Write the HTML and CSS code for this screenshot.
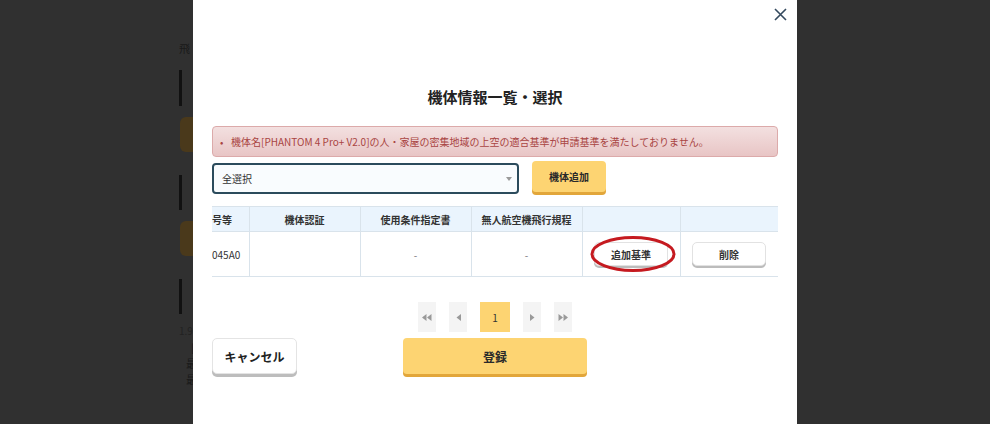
FILE: index.html
```html
<!DOCTYPE html>
<html lang="ja">
<head>
<meta charset="utf-8">
<title>機体情報一覧・選択</title>
<link rel="stylesheet" href="styles.css">
</head>
<body>
<div class="screen">
  <div class="backdrop-left">
    <div class="ghost">
      <p class="ghost-text">飛</p>
      <div class="ghost-bar first"></div>
      <div class="ghost-btn"></div>
      <div class="ghost-bar"></div>
      <div class="ghost-btn"></div>
      <div class="ghost-bar"></div>
      <p class="ghost-text num">1.9</p>
      <p class="ghost-text line indent-a">[</p>
      <p class="ghost-text line indent-b">最大</p>
      <p class="ghost-text line indent-b">最大</p>
    </div>
  </div>

  <div class="modal">
    <button class="close" type="button" aria-label="閉じる">
      <svg viewBox="0 0 13 13" width="13" height="13"><path d="M1 1L12 12M12 1L1 12" stroke="#34495e" stroke-width="1.6" fill="none"/></svg>
    </button>

    <h2 class="title">機体情報一覧・選択</h2>

    <ul class="alert">
      <li class="alert-item">機体名[PHANTOM 4 Pro+ V2.0]の人・家屋の密集地域の上空の適合基準が申請基準を満たしておりません。</li>
    </ul>

    <div class="controls">
      <div class="select-wrap">
        <select class="select">
          <option>全選択</option>
        </select>
      </div>
      <button class="btn-yellow add-btn" type="button">機体追加</button>
    </div>

    <div class="table-wrap">
      <table class="table">
        <colgroup>
          <col class="w-clip">
          <col class="w-wide">
          <col class="w-wide">
          <col class="w-wide">
          <col class="w-btn">
          <col class="w-btn">
        </colgroup>
        <thead>
          <tr>
            <th class="clip">号等</th>
            <th>機体認証</th>
            <th>使用条件指定書</th>
            <th>無人航空機飛行規程</th>
            <th></th>
            <th></th>
          </tr>
        </thead>
        <tbody>
          <tr>
            <td class="clip">045A0</td>
            <td></td>
            <td class="dash">-</td>
            <td class="dash">-</td>
            <td class="marked">
              <button class="row-btn" type="button">追加基準</button>
              <svg class="ring" viewBox="0 0 86 38" width="86" height="38"><ellipse cx="43" cy="19" rx="41" ry="16.5" fill="none" stroke="#c51a20" stroke-width="3"/></svg>
            </td>
            <td><button class="row-btn" type="button">削除</button></td>
          </tr>
        </tbody>
      </table>
    </div>

    <div class="pager">
      <span class="page">
        <svg viewBox="0 0 10 7" width="10" height="7"><path d="M4.5 0L0 3.5L4.5 7Z M9.5 0L5 3.5L9.5 7Z" fill="#999"/></svg>
      </span>
      <span class="page">
        <svg viewBox="0 0 5 7" width="5" height="7"><path d="M5 0L0.5 3.5L5 7Z" fill="#999"/></svg>
      </span>
      <span class="page current">1</span>
      <span class="page">
        <svg viewBox="0 0 5 7" width="5" height="7"><path d="M0 0L4.5 3.5L0 7Z" fill="#999"/></svg>
      </span>
      <span class="page">
        <svg viewBox="0 0 10 7" width="10" height="7"><path d="M0.5 0L5 3.5L0.5 7Z M5.5 0L10 3.5L5.5 7Z" fill="#999"/></svg>
      </span>
    </div>

    <div class="actions">
      <button class="cancel" type="button">キャンセル</button>
      <button class="btn-yellow register" type="button">登録</button>
    </div>
  </div>

  <div class="backdrop-right"></div>
</div>
</body>
</html>
```

FILE: styles.css
```css
* { box-sizing: border-box; }
html, body { margin: 0; padding: 0; }
body {
  background: #303030;
  font-family: "Noto Sans CJK JP", "Noto Sans", sans-serif;
  color: #333;
  height: 424px;
  overflow: hidden;
}
button, select { font-family: inherit; color: inherit; }

.screen { display: flex; height: 424px; }

/* dimmed page behind the dialog */
.backdrop-left { width: 193px; flex: none; overflow: hidden; }
.backdrop-right { flex: 1; }
.ghost { margin-left: 179px; width: 220px; padding-top: 40px; }
.ghost-text {
  margin: 0;
  font-size: 11px;
  line-height: 16px;
  color: #1a1a1a;
  white-space: nowrap;
}
.ghost-text.num { margin-top: 9px; font-size: 10px; color: #222; }
.ghost-text.indent-a { padding-left: 12px; }
.ghost-text.indent-b { padding-left: 7px; }
.ghost-bar { width: 3px; height: 35px; background: #111; margin-top: 23px; }
.ghost-bar.first { margin-top: 14px; height: 36px; }
.ghost-btn {
  height: 35px;
  margin-top: 11px;
  margin-left: 1px;
  background: #4a391b;
  border-radius: 6px 0 0 6px;
}

/* dialog */
.modal {
  width: 604px;
  flex: none;
  background: #fff;
  position: relative;
  padding: 87px 19px 0;
}
.close {
  position: absolute;
  top: 8px;
  right: 10px;
  width: 13px;
  height: 13px;
  padding: 0;
  border: 0;
  background: none;
  display: block;
}
.close svg { display: block; }

.title {
  margin: 0;
  text-align: center;
  font-size: 15px;
  line-height: 20px;
  font-weight: 700;
  color: #222;
}

.alert {
  list-style: none;
  margin: 19px 0 0;
  padding: 0 0 0 7px;
  height: 31px;
  border: 1px solid #dcaaaa;
  border-radius: 4px;
  background: linear-gradient(#f3e0e0, #e8c5c5);
  color: #a94442;
  font-size: 10px;
  line-height: 29px;
}
.alert-item { display: flex; white-space: nowrap; }
.alert-item::before { content: "•"; width: 11px; flex: none; }

.controls {
  display: flex;
  gap: 13px;
  align-items: flex-start;
  margin-top: 4px;
}
.select-wrap { position: relative; width: 307px; margin-top: 2px; }
.select {
  appearance: none;
  -webkit-appearance: none;
  display: block;
  width: 100%;
  height: 31px;
  border: 2px solid #2b4b5c;
  border-radius: 4px;
  background: #f9fcfe;
  font-size: 10px;
  padding: 0 8px;
  outline: none;
}
.select-wrap::after {
  content: "";
  position: absolute;
  right: 7px;
  top: 14px;
  border-left: 3px solid transparent;
  border-right: 3px solid transparent;
  border-top: 4px solid #9a9a9a;
}

.btn-yellow {
  background: #fdd472;
  border: 0;
  border-radius: 4px;
  box-shadow: 0 3px 0 #e2a63a;
  font-weight: 700;
  color: #2a2a2a;
  padding: 0;
}
.add-btn { width: 74px; height: 31px; font-size: 10px; }

.table-wrap { margin-top: 12px; overflow: hidden; }
.table {
  width: 566px;
  border-collapse: collapse;
  table-layout: fixed;
  font-size: 10px;
}
.w-clip { width: 37px; }
.w-wide { width: 111px; }
.w-btn { width: 98px; }
.table th {
  height: 25px;
  padding: 0;
  background: #eaf4fd;
  font-weight: 700;
  color: #333;
  border: 1px solid #d9e3eb;
}
.table td {
  height: 45px;
  padding: 0;
  text-align: center;
  border: 1px solid #d9e3eb;
  color: #333;
}
.table .clip {
  text-align: left;
  border-left: 0;
  white-space: nowrap;
  overflow: hidden;
  font-weight: 400;
}
.table th.clip { font-weight: 700; }
.table .dash { color: #777; }
.marked { position: relative; }
.row-btn {
  width: 74px;
  height: 24px;
  background: #fff;
  border: 1px solid #e2e2e2;
  border-radius: 5px;
  box-shadow: 0 2px 0 #bcbcbc;
  font-size: 10px;
  font-weight: 700;
  color: #333;
  padding: 0;
  vertical-align: middle;
}
.ring {
  position: absolute;
  left: 7px;
  top: 3px;
}

.pager {
  display: flex;
  justify-content: center;
  gap: 13px;
  margin-top: 25px;
}
.page {
  width: 18px;
  height: 30px;
  background: #f4f4f4;
  display: flex;
  align-items: center;
  justify-content: center;
  font-size: 10px;
  color: #333;
}
.page.current { width: 30px; background: #fdd472; }

.actions {
  display: grid;
  grid-template-columns: 1fr 184px 1fr;
  margin-top: 6px;
}
.cancel {
  justify-self: start;
  width: 85px;
  height: 36px;
  background: #fff;
  border: 1px solid #e4e4e4;
  border-radius: 5px;
  box-shadow: 0 3px 0 #bdbdbd;
  font-size: 12px;
  font-weight: 700;
  color: #222;
  padding: 0;
}
.register { height: 36px; font-size: 12px; }
```
